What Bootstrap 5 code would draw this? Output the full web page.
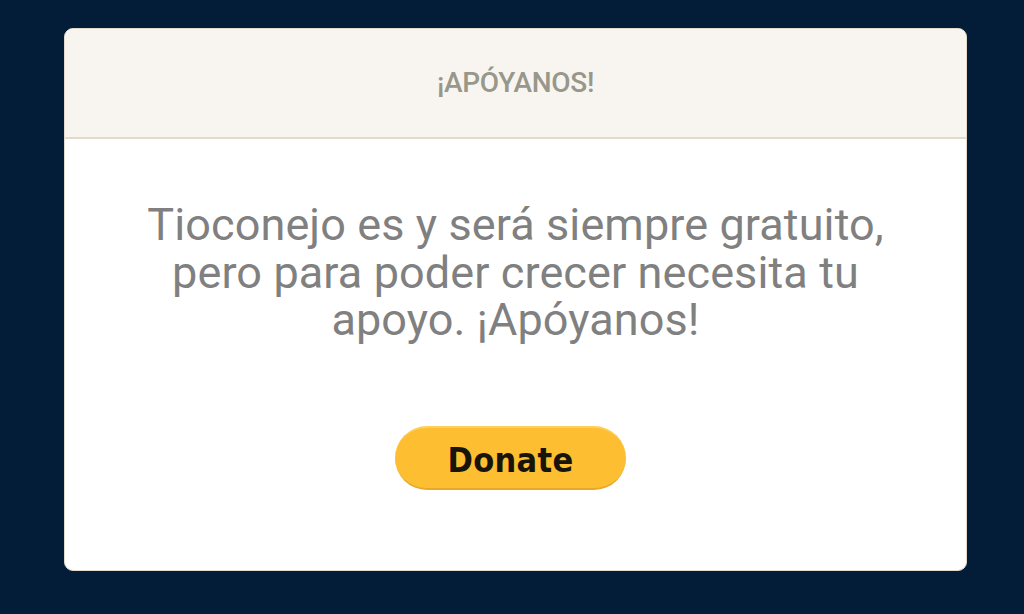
<!DOCTYPE html>
<html lang="es">
<head>
<meta charset="utf-8">
<title>Apóyanos</title>
<link href="https://cdn.jsdelivr.net/npm/bootstrap@5.3.0/dist/css/bootstrap.min.css" rel="stylesheet">
<style>
html, body { height: 100%; }
body { background: #031c37; font-family: Roboto, "Liberation Sans", sans-serif; overflow: hidden; }
.stage { height: 614px; padding: 28px 57px 43px 64px; }
.panel { height: 100%; border: 1px solid #e2dbcd; border-radius: 9px; background: #fff; overflow: hidden; }
.panel .card-header { height: 110px; background: #f8f5f0; border-bottom: 2px solid #e2dbcd; border-radius: 0; color: #97978a; font-size: 28px; font-weight: 500; letter-spacing: -0.3px; padding: 0; }
.panel .card-body { padding: 62px 72px 0; }
.msg { color: #808080; font-size: 45px; line-height: 47.5px; letter-spacing: .1px; margin: 0; }
.paybtn { width: 231px; height: 64px; margin-top: 82px; margin-right: 10px; padding: 4px 0 0; border: 0; border-radius: 32px; background: #fdbf31; border-top: 2px solid #ffcf5c; border-bottom: 2px solid #e8a92a; color: #17140a; font-family: "DejaVu Sans", sans-serif; font-stretch: condensed; font-size: 34px; font-weight: 700; line-height: 1; letter-spacing: .3px; }
</style>
</head>
<body>
<div class="stage">
  <div class="card panel">
    <div class="card-header d-flex align-items-center justify-content-center">¡APÓYANOS!</div>
    <div class="card-body d-flex flex-column align-items-center text-center">
      <p class="msg">Tioconejo es y será siempre gratuito, pero para poder crecer necesita tu apoyo. ¡Apóyanos!</p>
      <button type="button" class="btn paybtn">Donate</button>
    </div>
  </div>
</div>
<script src="https://cdn.jsdelivr.net/npm/bootstrap@5.3.0/dist/js/bootstrap.bundle.min.js"></script>
</body>
</html>
